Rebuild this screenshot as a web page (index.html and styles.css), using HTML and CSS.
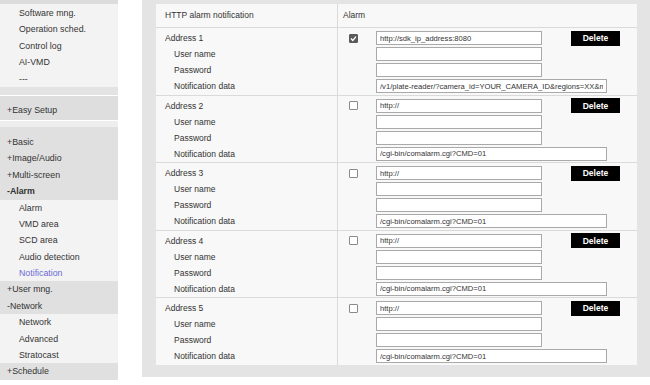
FILE: index.html
```html
<!DOCTYPE html>
<html lang="en">
<head>
  <meta charset="UTF-8" />
  <title>HTTP alarm notification</title>
  <link rel="stylesheet" href="styles.css">
</head>
<body>
  <div class="layout">
    <nav class="side">
      <div class="cap"></div>
      <ul class="sub">
        <li>Software mng.</li>
        <li>Operation sched.</li>
        <li>Control log</li>
        <li>AI-VMD</li>
        <li>---</li>
      </ul>
      <div class="strip"></div>
      <div class="easy">+Easy Setup</div>
      <div class="strip light"></div>
      <ul class="group first">
        <li>+Basic</li>
        <li>+Image/Audio</li>
        <li>+Multi-screen</li>
        <li class="open">-Alarm</li>
      </ul>
      <ul class="sub">
        <li>Alarm</li>
        <li>VMD area</li>
        <li>SCD area</li>
        <li>Audio detection</li>
        <li class="active">Notification</li>
      </ul>
      <ul class="group">
        <li>+User mng.</li>
        <li>-Network</li>
      </ul>
      <ul class="sub">
        <li>Network</li>
        <li>Advanced</li>
        <li>Stratocast</li>
      </ul>
      <ul class="group">
        <li>+Schedule</li>
      </ul>
    </nav>

    <main class="main">
      <div class="panel">
        <div class="head">
          <div class="head-l">HTTP alarm notification</div>
          <div class="head-r">Alarm</div>
        </div>

        <!-- Address 1 -->
        <div class="block">
          <div class="labels">
            <div class="line">Address 1</div>
            <div class="line sub-label">User name</div>
            <div class="line sub-label">Password</div>
            <div class="line sub-label">Notification data</div>
          </div>
          <div class="fields">
            <div class="line">
              <span class="check checked"><svg viewBox="0 0 9 9" width="9" height="9"><path d="M2 4.6 L3.8 6.4 L7 2.6" fill="none" stroke="#fff" stroke-width="1.4"/></svg></span>
              <input class="url" type="text" value="http://sdk_ip_address:8080" />
              <button class="del">Delete</button>
            </div>
            <div class="line pad"><input class="url" type="text" /></div>
            <div class="line pad"><input class="url" type="password" /></div>
            <div class="line pad"><input class="data" type="text" value="/v1/plate-reader/?camera_id=YOUR_CAMERA_ID&amp;regions=XX&amp;mmc=true" /></div>
          </div>
        </div>

        <!-- Address 2 -->
        <div class="block">
          <div class="labels">
            <div class="line">Address 2</div>
            <div class="line sub-label">User name</div>
            <div class="line sub-label">Password</div>
            <div class="line sub-label">Notification data</div>
          </div>
          <div class="fields">
            <div class="line">
              <span class="check"></span>
              <input class="url" type="text" value="http://" />
              <button class="del">Delete</button>
            </div>
            <div class="line pad"><input class="url" type="text" /></div>
            <div class="line pad"><input class="url" type="password" /></div>
            <div class="line pad"><input class="data" type="text" value="/cgi-bin/comalarm.cgi?CMD=01" /></div>
          </div>
        </div>

        <!-- Address 3 -->
        <div class="block">
          <div class="labels">
            <div class="line">Address 3</div>
            <div class="line sub-label">User name</div>
            <div class="line sub-label">Password</div>
            <div class="line sub-label">Notification data</div>
          </div>
          <div class="fields">
            <div class="line">
              <span class="check"></span>
              <input class="url" type="text" value="http://" />
              <button class="del">Delete</button>
            </div>
            <div class="line pad"><input class="url" type="text" /></div>
            <div class="line pad"><input class="url" type="password" /></div>
            <div class="line pad"><input class="data" type="text" value="/cgi-bin/comalarm.cgi?CMD=01" /></div>
          </div>
        </div>

        <!-- Address 4 -->
        <div class="block">
          <div class="labels">
            <div class="line">Address 4</div>
            <div class="line sub-label">User name</div>
            <div class="line sub-label">Password</div>
            <div class="line sub-label">Notification data</div>
          </div>
          <div class="fields">
            <div class="line">
              <span class="check"></span>
              <input class="url" type="text" value="http://" />
              <button class="del">Delete</button>
            </div>
            <div class="line pad"><input class="url" type="text" /></div>
            <div class="line pad"><input class="url" type="password" /></div>
            <div class="line pad"><input class="data" type="text" value="/cgi-bin/comalarm.cgi?CMD=01" /></div>
          </div>
        </div>

        <!-- Address 5 -->
        <div class="block">
          <div class="labels">
            <div class="line">Address 5</div>
            <div class="line sub-label">User name</div>
            <div class="line sub-label">Password</div>
            <div class="line sub-label">Notification data</div>
          </div>
          <div class="fields">
            <div class="line">
              <span class="check"></span>
              <input class="url" type="text" value="http://" />
              <button class="del">Delete</button>
            </div>
            <div class="line pad"><input class="url" type="text" /></div>
            <div class="line pad"><input class="url" type="password" /></div>
            <div class="line pad"><input class="data" type="text" value="/cgi-bin/comalarm.cgi?CMD=01" /></div>
          </div>
        </div>
      </div>
    </main>
  </div>
</body>
</html>
```

FILE: styles.css
```css
body {
  margin: 0;
  background: #ffffff;
  font-family: 'Liberation Sans', Arial, sans-serif;
  color: #333;
  overflow: hidden;
}

.layout {
  display: flex;
  gap: 24px;
  height: 385px;
}

/* Sidebar menu */
.side {
  width: 118px;
  flex-shrink: 0;
  font-size: 8.8px;
}

.side ul {
  list-style: none;
  margin: 0;
  padding: 0;
}

.side li {
  height: 16.4px;
  line-height: 16.4px;
  white-space: nowrap;
}

.cap {
  height: 4px;
  background: #dcdcdc;
}

.sub {
  background: #f3f3f3;
}

.sub li {
  padding-left: 19px;
}

.side > .sub:first-of-type {
  padding-top: 1px;
}

.sub li.active {
  color: #6a6ad8;
}

.strip {
  height: 8px;
  background: #e3e3e3;
  border-bottom: 1px solid #fff;
}

.strip.light {
  height: 6px;
  background: #eeeeee;
  border-top: 1px solid #fff;
  border-bottom: none;
}

.easy {
  height: 24px;
  line-height: 28px;
  padding-left: 7px;
  background: #dedede;
}

.group {
  background: #e0e0e0;
}

.group.first {
  padding-top: 7px;
}

.group li {
  padding-left: 7px;
}

.group li.open {
  font-weight: bold;
}

/* Main area */
.main {
  flex: 1;
  height: 377px;
  background: #e4e4e4;
  padding: 4px 13px 0 14px;
  box-sizing: border-box;
}

.panel {
  background: #f8f8f8;
  font-size: 8.5px;
}

.head {
  display: grid;
  grid-template-columns: 181px 1fr;
  height: 23px;
  line-height: 23px;
}

.head-l {
  padding-left: 9px;
}

.head-r {
  border-left: 1px solid #dadada;
  padding-left: 5px;
}

.block {
  display: grid;
  grid-template-columns: 181px 1fr;
  border-top: 1px solid #dadada;
}

.labels {
  padding: 2px 0 0.5px 9px;
}

.line {
  height: 16px;
  line-height: 16px;
  display: flex;
  align-items: center;
  white-space: nowrap;
}

.sub-label {
  padding-left: 9px;
}

.fields {
  border-left: 1px solid #dadada;
  padding: 2px 17px 0.5px 11px;
  overflow: hidden;
}

.fields .pad {
  padding-left: 27px;
}

.check {
  width: 9px;
  height: 9px;
  box-sizing: border-box;
  border: 1px solid #8a8a8a;
  border-radius: 1px;
  background: #fff;
  margin-right: 18px;
  flex-shrink: 0;
  display: flex;
}

.check.checked {
  background: #5a5a5a;
  border-color: #5a5a5a;
}

.check svg {
  margin: -1px;
}

input {
  height: 14px;
  box-sizing: border-box;
  border: 1px solid #a9a9a9;
  background: #fff;
  font-family: 'Liberation Sans', Arial, sans-serif;
  font-size: 7.6px;
  color: #333;
  padding: 0 3px;
  margin: 0;
  outline: none;
}

input.url {
  width: 166px;
}

input.data {
  width: 231px;
}

.del {
  margin-left: auto;
  width: 49px;
  height: 15px;
  padding: 0;
  border: none;
  background: #000;
  color: #fff;
  font-family: 'Liberation Sans', Arial, sans-serif;
  font-size: 8.5px;
  font-weight: bold;
}
```
